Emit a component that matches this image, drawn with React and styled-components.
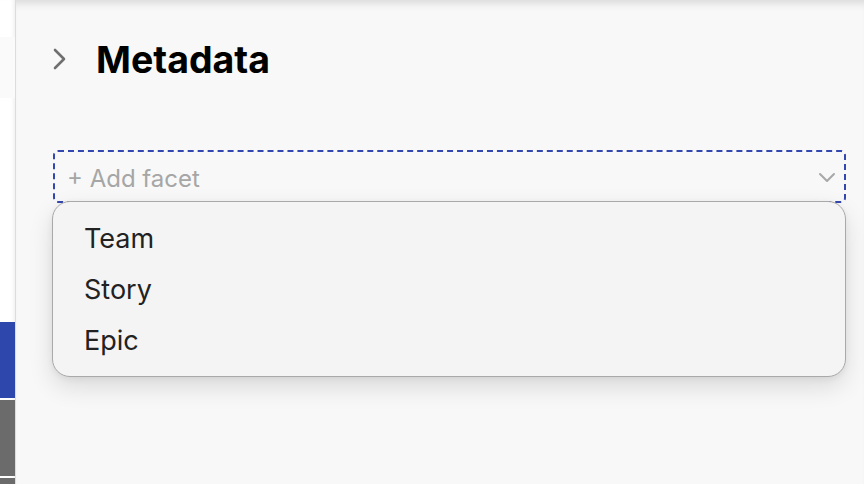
import React from "react";
import styled, { createGlobalStyle } from "styled-components";

const GlobalStyle = createGlobalStyle`
  html, body {
    margin: 0;
    padding: 0;
    width: 864px;
    height: 484px;
    overflow: hidden;
    background: #f8f8f8;
    font-family: Inter, "Liberation Sans", sans-serif;
  }
`;

const Page = styled.div`
  display: flex;
  width: 864px;
  height: 484px;
`;

const Sidebar = styled.aside`
  display: flex;
  flex-direction: column;
  width: 15px;
  flex-shrink: 0;
  background: #ffffff;
  border-right: 1px solid #dcdcdc;
  box-shadow: inset -4px 0 4px -3px rgba(0, 0, 0, 0.08);
`;

const Strip = styled.div`
  height: ${(p) => p.$h}px;
  flex-shrink: 0;
  background: ${(p) => p.$color || "transparent"};
  margin-bottom: ${(p) => p.$gap || 0}px;
`;

const Main = styled.main`
  position: relative;
  flex: 1;
  padding: 36px 18px 0 36px;
  background: #f8f8f8;
  box-shadow: inset 0 9px 8px -6px rgba(0, 0, 0, 0.13);
`;

const Header = styled.div`
  display: flex;
  align-items: center;
  gap: 28px;
  height: 46px;
`;

const Chevron = styled.svg`
  width: 16px;
  height: 24px;
`;

const Title = styled.h2`
  margin: 0;
  font-size: 37.5px;
  font-weight: 700;
  color: #000000;
`;

const Facet = styled.div`
  position: relative;
  margin-top: 68px;
  margin-left: 1px;
`;

const FacetInput = styled.div`
  display: flex;
  align-items: center;
  justify-content: space-between;
  box-sizing: border-box;
  height: 53px;
  padding: 3px 8px 0 12px;
  border: 2px dashed #3347b0;
  border-radius: 5px;
`;

const Placeholder = styled.span`
  font-size: 24px;
  color: #a6a6a6;
`;

const Caret = styled.svg`
  width: 18px;
  height: 12px;
`;

const Menu = styled.ul`
  position: absolute;
  top: 51px;
  left: -1px;
  right: 0;
  margin: 0;
  padding: 19px 0 0;
  height: 176px;
  box-sizing: border-box;
  list-style: none;
  background: #f4f4f4;
  border: 1px solid #a9a9a9;
  border-radius: 18px;
  box-shadow: 0 10px 24px rgba(0, 0, 0, 0.12), 0 2px 6px rgba(0, 0, 0, 0.06);
`;

const Item = styled.li`
  height: 51px;
  line-height: 36px;
  padding-left: 31px;
  font-size: 27px;
  color: #222222;
`;

export default function App() {
  return (
    <Page>
      <GlobalStyle />
      <Sidebar>
        <Strip $h={37} />
        <Strip $h={61} $color="#fafafa" />
        <Strip $h={224} />
        <Strip $h={76} $color="#2e47ad" $gap={2} />
        <Strip $h={76} $color="#6b6b6b" $gap={2} />
        <Strip $h={20} $color="#6b6b6b" />
      </Sidebar>
      <Main>
        <Header>
          <Chevron viewBox="0 0 16 24">
            <path d="M3 3 L12 12 L3 21" fill="none" stroke="#6f6f6f" strokeWidth="2.6" strokeLinecap="round" strokeLinejoin="round" />
          </Chevron>
          <Title>Metadata</Title>
        </Header>
        <Facet>
          <FacetInput>
            <Placeholder>+ Add facet</Placeholder>
            <Caret viewBox="0 0 18 12">
              <path d="M2 2 L9 9 L16 2" fill="none" stroke="#a8a8a8" strokeWidth="2" strokeLinecap="round" strokeLinejoin="round" />
            </Caret>
          </FacetInput>
          <Menu>
            <Item>Team</Item>
            <Item>Story</Item>
            <Item>Epic</Item>
          </Menu>
        </Facet>
      </Main>
    </Page>
  );
}
